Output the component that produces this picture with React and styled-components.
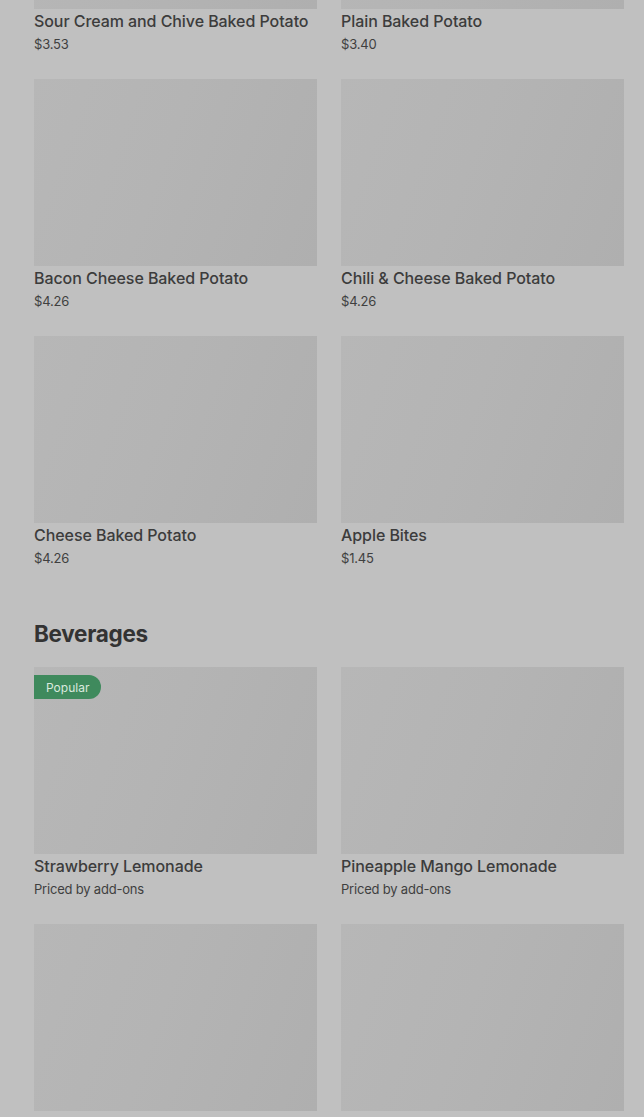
import React from "react";
import styled, { createGlobalStyle } from "styled-components";

const Global = createGlobalStyle`
  html, body { margin: 0; padding: 0; background: #c0c0c0; overflow: hidden; }
  body { font-family: Inter, "Noto Sans", sans-serif; }
`;

const Page = styled.main`
  margin-top: -178px;
  padding: 0 20px 0 34px;
  display: flex;
  flex-direction: column;
`;

const Section = styled.section`
  display: flex;
  flex-direction: column;
  margin-bottom: 50px;
`;

const SectionTitle = styled.h2`
  margin: 0 0 17px;
  font-size: 22.5px;
  line-height: 32px;
  font-weight: 700;
  color: #333;
  letter-spacing: -0.3px;
`;

const Grid = styled.div`
  display: grid;
  grid-template-columns: 283px 283px;
  column-gap: 24px;
  row-gap: 25px;
`;

const Card = styled.div`
  display: flex;
  flex-direction: column;
`;

const Thumb = styled.div`
  position: relative;
  height: 187px;
  background: linear-gradient(110deg, #b7b7b7 0%, #b4b4b4 45%, #afafaf 100%);
`;

const Badge = styled.span`
  position: absolute;
  top: 8px;
  left: 0;
  height: 24px;
  padding: 0 12px;
  display: flex;
  align-items: center;
  background: #3f8a5d;
  color: #dbe9df;
  font-size: 12px;
  border-radius: 0 12px 12px 0;
`;

const Name = styled.div`
  margin-top: 2px;
  font-size: 16px;
  line-height: 20px;
  font-weight: 500;
  color: #3c3c3c;
  letter-spacing: -0.07px;
  white-space: nowrap;
`;

const Price = styled.div`
  margin-top: 3px;
  font-size: 13px;
  line-height: 20px;
  color: #3f3f3f;
  letter-spacing: -0.2px;
`;

const potatoes = [
  ["Sour Cream and Chive Baked Potato", "$3.53"],
  ["Plain Baked Potato", "$3.40"],
  ["Bacon Cheese Baked Potato", "$4.26"],
  ["Chili & Cheese Baked Potato", "$4.26"],
  ["Cheese Baked Potato", "$4.26"],
  ["Apple Bites", "$1.45"],
];

const beverages = [
  ["Strawberry Lemonade", "Priced by add-ons", true],
  ["Pineapple Mango Lemonade", "Priced by add-ons"],
  ["", ""],
  ["", ""],
];

const Item = ({ name, price, popular }) => (
  <Card>
    <Thumb>{popular && <Badge>Popular</Badge>}</Thumb>
    {name && <Name>{name}</Name>}
    {price && <Price>{price}</Price>}
  </Card>
);

export default function App() {
  return (
    <>
      <Global />
      <Page>
        <Section>
          <Grid>
            {potatoes.map(([n, p]) => (
              <Item key={n} name={n} price={p} />
            ))}
          </Grid>
        </Section>
        <Section>
          <SectionTitle>Beverages</SectionTitle>
          <Grid>
            {beverages.map(([n, p, pop], i) => (
              <Item key={i} name={n} price={p} popular={pop} />
            ))}
          </Grid>
        </Section>
      </Page>
    </>
  );
}
